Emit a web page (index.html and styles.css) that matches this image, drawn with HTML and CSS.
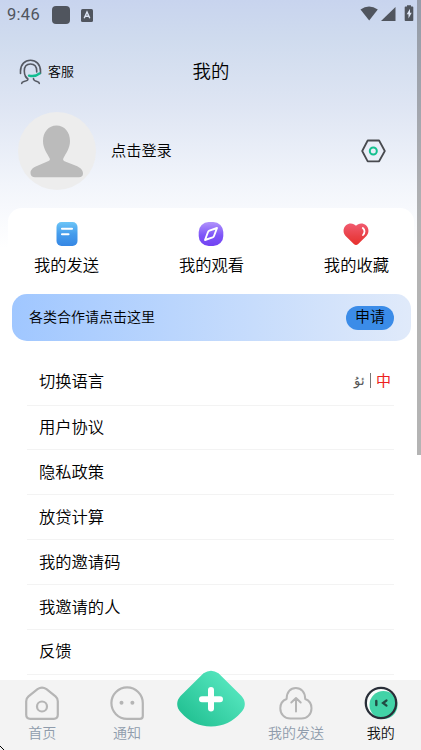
FILE: index.html
```html
<!DOCTYPE html>
<html lang="zh-CN">
<head>
<meta charset="utf-8">
<title>我的</title>
<link rel="stylesheet" href="styles.css">
</head>
<body>
<div class="screen">
  <div class="status">
    <span class="clock">9:46</span>
    <span class="status-square"></span>
    <svg class="status-a" width="12" height="13" viewBox="0 0 12 13"><rect width="12" height="13" rx="1.5" fill="#50555e"/><path d="M3.2 9.3 6 3l2.800 6.300M4.300 7.300h3.400" fill="none" stroke="#dce4f3" stroke-width="1.400"/></svg>
    <svg class="status-right" width="54" height="18" viewBox="0 0 54 18" fill="#50555e">
      <path d="M.5 4.500Q9 -1.500 17.800 4.500L9.200 15.500Z"/>
      <path d="M35.500 2v14H21Z"/>
      <path d="M45.500 1.500h1.500V.3h4v1.200h1.500q.8 0 .8.800v12.900q0 .8-.8.800h-7q-.8 0-.8-.8V2.300q0-.8.800-.8Z"/>
      <path d="m50 3.800-3.300 5.500h1.800v4.200l3.200-5.700H50Z" fill="#dce4f3"/>
    </svg>
  </div>
  <header class="header">
    <div class="service">
      <svg width="24" height="26" viewBox="0 0 24 26" fill="none" stroke="#555962" stroke-width="1.600" stroke-linecap="round">
        <path d="M1.500 14.500v-2.300C1.500 5.300 6 1.300 11.500 1.300s10 4 10 10.900v2.300"/>
        <path d="M6.600 17.500C5.300 15.700 5.300 14 5.300 12c0-4.400 2.500-7 6.200-7s6.200 2.600 6.200 7v1"/>
        <path d="M6.600 17.500c.5.900 1.200 1.600 2.200 2.200.5 1.600-.8 2.100-3.800 2.800-1.600.4-2.300.9-2.300 2M14.500 19.500c-.3 1.800.8 2.300 3.500 3 1.600.4 2.300.9 2.300 2"/>
        <path d="M10 16.600c4.500 1.200 7.500.3 10.500-2.100" stroke="#13bd91" stroke-width="2.400"/>
      </svg>
      <span>客服</span>
    </div>
    <h1>我的</h1>
  </header>
  <section class="profile">
    <svg class="avatar" width="78" height="78" viewBox="0 0 78 78"><circle cx="39" cy="39" r="39" fill="#ededed"/><path d="M38.500 13.500c8 0 13.500 6.500 13.500 15.500 0 7.500-4 12-6.500 17-.7 1.500-.5 2.500 1 3.200l11.500 4.600c5 2 7 4.700 7 7.700 0 2.500-1.500 3.800-4 3.800H17c-2.500 0-4.500-1.300-4.500-4.300s2-5.200 7-7.200L30.500 49c1.500-.6 1.700-1.600 1-3C29 41 25 36.500 25 29c0-9 5.500-15.500 13.500-15.500Z" fill="#bbb"/></svg>
    <span class="login">点击登录</span>
    <svg class="setting" width="25" height="24" viewBox="0 0 25 24" fill="none"><path d="M6.700 1.500h11.400L23.800 12l-5.700 10.300H6.700L1.200 12Z" stroke="#484a4f" stroke-width="1.800" stroke-linejoin="round"/><circle cx="12.300" cy="12" r="3.500" stroke="#14c08f" stroke-width="2"/></svg>
  </section>
  <main class="card">
    <div class="shortcuts">
      <div class="shortcut">
        <svg width="26" height="26" viewBox="0 0 26 26"><defs><linearGradient id="doc" x2="0" y2="1"><stop stop-color="#6cc5f7"/><stop offset=".5" stop-color="#459cec"/><stop offset="1" stop-color="#3687e4"/></linearGradient></defs><rect x="2.500" y="1" width="21" height="24" rx="5" fill="url(#doc)"/><path d="M8 7.700h10M8 13.300h6.500" stroke="#fff" stroke-width="2.100" stroke-linecap="round"/></svg>
        <span>我的发送</span>
      </div>
      <div class="shortcut">
        <svg width="26" height="26" viewBox="0 0 26 26"><defs><linearGradient id="view" x2="0" y2="1"><stop stop-color="#b193fb"/><stop offset=".55" stop-color="#7e55f8"/><stop offset="1" stop-color="#7142f2"/></linearGradient></defs><rect x=".7" y="1" width="24.600" height="24" rx="10" fill="url(#view)"/><path d="m19 7-3 8q-.4 1-1.400 1.400L7 19l3-8q.4-1 1.400-1.400Z" fill="none" stroke="#fff" stroke-width="1.900" stroke-linejoin="round"/></svg>
        <span>我的观看</span>
      </div>
      <div class="shortcut">
        <svg width="26" height="26" viewBox="0 0 26 26"><defs><linearGradient id="heart" x2="0" y2="1"><stop stop-color="#f15b70"/><stop offset=".6" stop-color="#e94045"/><stop offset="1" stop-color="#e8302d"/></linearGradient></defs><path d="M13 4.800C15 2 20 1.400 23 4.200c3.200 3 3.200 7.700.4 10.700l-8.200 8.200q-2.200 2-4.400 0l-8.200-8.200C-.2 11.900-.2 7.200 3 4.200 6 1.400 11 2 13 4.800Z" fill="url(#heart)"/><path d="M19.800 7c2.200 1.700 2.300 4.800.2 7" fill="none" stroke="#fff" stroke-width="1.800" stroke-linecap="round"/></svg>
        <span>我的收藏</span>
      </div>
    </div>
    <div class="banner"><span class="banner-text">各类合作请点击这里</span><span class="apply">申请</span></div>
    <ul class="menu">
      <li><span>切换语言</span><span class="lang"><span class="uyghur" lang="ug">ئۇ</span><i></i><b>中</b></span></li>
      <li>用户协议</li>
      <li>隐私政策</li>
      <li>放贷计算</li>
      <li>我的邀请码</li>
      <li>我邀请的人</li>
      <li>反馈</li>
    </ul>
  </main>
  <nav class="tabs">
    <div class="tab">
      <svg width="34" height="34" viewBox="0 0 34 34" fill="none" stroke="#b5b5b5" stroke-width="2.200"><path d="M12.500 3.200q4.500-3 9 0l9 7.200q2.300 2 2.300 4.800v13.600q0 4-4 4H5.200q-4 0-4-4V15.200q0-2.800 2.300-4.800Z"/><circle cx="17" cy="20.500" r="5"/></svg>
      <span>首页</span>
    </div>
    <div class="tab">
      <svg width="34" height="34" viewBox="0 0 34 34" fill="none" stroke="#b5b5b5" stroke-width="2.200"><path d="M17 32.800A15.700 15.700 0 1 1 32.800 17v13q0 2.800-2.800 2.800Z"/><circle cx="11.500" cy="16.700" r="2" fill="#b5b5b5" stroke="none"/><circle cx="22.400" cy="16.700" r="2" fill="#b5b5b5" stroke="none"/></svg>
      <span>通知</span>
    </div>
    <div class="tab plus">
      <svg width="70" height="58" viewBox="0 0 70 58"><defs><linearGradient id="add" x1=".1" y1=".8" x2=".8" y2=".2"><stop stop-color="#24c294"/><stop offset="1" stop-color="#54e5bd"/></linearGradient></defs><path d="M27.500 3.300q7.500-5 15 0L65.500 26c4.500 5 4.500 11.500-.5 16.500C57 51.500 47 56.500 35 56.500S13 51.500 5 42.500C0 37.500 0 31 4.500 26Z" fill="url(#add)"/><path d="M35 20v18.500M26 29.300h18" stroke="#fff" stroke-width="6" stroke-linecap="round"/></svg>
    </div>
    <div class="tab">
      <svg width="34" height="34" viewBox="0 0 34 34" fill="none" stroke="#b5b5b5" stroke-width="2" stroke-linecap="round" stroke-linejoin="round"><path d="M7.600 13C7.600 6 11.500 2 16.800 2s9.400 4 9.400 11c4 1.500 6.300 5 6.300 9.200 0 6-4.300 10.300-10 10.300H11.300c-5.700 0-10-4.300-10-10.300C1.300 18 3.600 14.500 7.600 13ZM17 25.500V12.300M12.300 16.500 17 12l4.700 4.500"/></svg>
      <span>我的发送</span>
    </div>
    <div class="tab active">
      <svg width="34" height="34" viewBox="0 0 34 34" fill="none"><circle cx="17" cy="17" r="15" fill="#f8fdfb"/><circle cx="19.500" cy="19" r="14" fill="#42d3a7"/><circle cx="17" cy="17" r="15.200" stroke="#292e38" stroke-width="2.300"/><path d="M12.300 15v4" stroke="#214b43" stroke-width="2.400" stroke-linecap="round"/><path d="m22.500 14.500-3.500 2.500 3.500 2.600" stroke="#214b43" stroke-width="2.200" stroke-linecap="round"/></svg>
      <span>我的</span>
    </div>
  </nav>
  <div class="scrollbar"></div>
  <svg class="corner" width="5" height="5" viewBox="0 0 5 5"><path d="M0 1h1v1h1v1H1V2H0zM2 3h1v1H2zM3 4h1v1H3z" fill="#000"/></svg>
</div>
</body>
</html>
```
FILE: styles.css
```css
* { box-sizing: border-box; }
body { margin: 0; font-family: Roboto, "Noto Sans CJK SC", sans-serif; font-weight: 350; color: #000; }
svg { display: block; flex: none; }
.screen { position: relative; width: 421px; height: 750px; overflow: hidden; display: flex; flex-direction: column; background: linear-gradient(#c8d4ee 0, #cfdbee 38px, #dee5f3 105px, #f2f5fb 185px, #fff 248px); }
.status { height: 30px; display: flex; align-items: center; padding: 0 7px; flex: none; color: #50555e; }
.clock { width: 45px; font-size: 16.500px; font-weight: 400; letter-spacing: .3px; line-height: 30px; }
.status-square { width: 18px; height: 18px; border-radius: 4px; background: #50555e; }
.status-a { margin-left: 11px; }
.status-right { margin-left: auto; margin-top: -3px; }
.header { height: 82px; flex: none; display: grid; grid-template-columns: 1fr auto 1fr; align-items: center; padding: 2px 18px 0 19px; }
.service { display: flex; align-items: center; gap: 5px; font-size: 13px; }
.service span { margin-top: -3px; }
.header h1 { margin: 0; font-size: 18.400px; font-weight: inherit; line-height: 28px; }
.profile { height: 78px; flex: none; display: flex; align-items: center; padding: 0 35px 0 18px; }
.login { margin-left: 15px; font-size: 15.200px; line-height: 24px; }
.setting { margin-left: auto; }
.card { height: 472px; flex: none; margin: 18px 7px 0 8px; padding-top: 13px; background: #fff; border-radius: 14px 14px 0 0; }
.shortcuts { height: 73px; display: flex; justify-content: space-between; padding: 0 25px 0 26px; }
.shortcut { display: flex; flex-direction: column; align-items: center; font-size: 16.300px; line-height: 24px; gap: 7px; }
.banner { height: 47px; margin: 0 3px 0 4px; padding: 0 17px; display: flex; align-items: center; justify-content: space-between; border-radius: 15px; background: linear-gradient(90deg, #a0c7ff, #e0eafa); font-size: 14px; }
.banner-text { padding-bottom: 3px; }
.apply { width: 48px; height: 24px; border-radius: 12px; background: #3b8ce8; text-align: center; font-size: 15px; line-height: 23px; }
.menu { list-style: none; margin: 19px 20px 0 19px; padding: 0; font-size: 16.300px; }
.menu li { height: 44.900px; border-bottom: 1px solid #f3f3f3; display: flex; align-items: center; justify-content: space-between; padding: 0 3px 3px 12px; }
.menu li:first-child { height: 45.500px; padding-bottom: 5px; }
.lang { display: flex; align-items: center; gap: 5px; line-height: 20px; padding-top: 2px; }
.uyghur { font-family: "DejaVu Sans", sans-serif; font-size: 13px; color: #555; }
.lang i { width: 1px; height: 15px; background: #777; }
.lang b { font-size: 15px; font-weight: 400; color: #ed2020; }
.tabs { width: 423px; height: 70px; flex: none; display: grid; grid-template-columns: repeat(5, 1fr); background: #f3f3f3; z-index: 1; }
.tab { display: flex; flex-direction: column; align-items: center; padding-top: 6px; gap: 3px; font-size: 14px; line-height: 20px; color: #8f9cac; }
.plus { padding: 0; }
.plus svg { margin-top: -10px; }
.active { color: #111; }
.scrollbar { position: absolute; right: 0; top: 0; width: 4px; height: 455px; background: rgba(85, 85, 85, .44); }
.corner { position: absolute; z-index: 2; left: 0; bottom: 0; }
```
